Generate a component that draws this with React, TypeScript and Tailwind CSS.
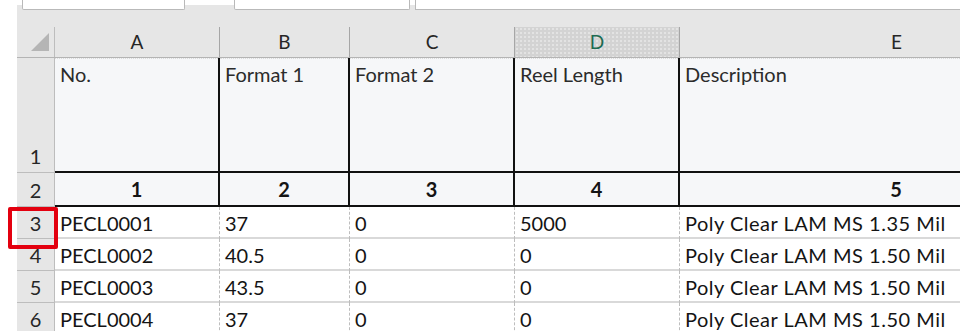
import React from "react";

type Col = { key: string; width: string; head: string; title: string; num: string };

const COLS: Col[] = [
  { key: "A", width: "w-[165px]", head: "A", title: "No.", num: "1" },
  { key: "B", width: "w-[130px]", head: "B", title: "Format 1", num: "2" },
  { key: "C", width: "w-[165px]", head: "C", title: "Format 2", num: "3" },
  { key: "D", width: "w-[165px]", head: "D", title: "Reel Length", num: "4" },
  { key: "E", width: "w-[434px]", head: "E", title: "Description", num: "5" },
];

const ROWS: { n: string; cells: string[] }[] = [
  { n: "3", cells: ["PECL0001", "37", "0", "5000", "Poly Clear LAM MS 1.35 Mil"] },
  { n: "4", cells: ["PECL0002", "40.5", "0", "0", "Poly Clear LAM MS 1.50 Mil"] },
  { n: "5", cells: ["PECL0003", "43.5", "0", "0", "Poly Clear LAM MS 1.50 Mil"] },
  { n: "6", cells: ["PECL0004", "37", "0", "0", "Poly Clear LAM MS 1.50 Mil"] },
];

function RowHead({ label, className = "" }: { label: string; className?: string }) {
  return (
    <div
      className={`w-[38px] shrink-0 flex justify-center bg-[#e6e6e6] border-r border-b border-[#bdbdbd] text-[#262626] ${className}`}
    >
      {label}
    </div>
  );
}

export default function App() {
  return (
    <div
      className="relative w-[960px] h-[331px] overflow-hidden bg-white text-[20px] text-[#141414]"
      style={{ fontFamily: "Lato, 'Noto Sans', sans-serif" }}
    >
      {/* formula bar remnants */}
      <div className="h-[27px] ml-[17px] flex items-start bg-[#e6e6e6] relative">
        <div className="absolute left-0 right-0 top-0 h-[5px] bg-white" />
        <div className="relative ml-[5px] w-[163px] h-[10px] bg-white border border-t-0 border-[#b9b9b9] rounded-b-[2px]" />
        <div className="relative ml-[49px] w-[176px] h-[10px] bg-white border border-t-0 border-[#b9b9b9] rounded-b-[2px]" />
        <div className="relative ml-[5px] flex-1 h-[10px] bg-white border border-t-0 border-r-0 border-[#b9b9b9]" />
      </div>

      <div className="ml-[17px] w-max">
        {/* column letters */}
        <div className="flex h-[31px] bg-[#e6e6e6] border-b border-[#b4b4b4] text-[19px]">
          <div className="w-[38px] shrink-0 flex items-end justify-end pr-[5px] pb-[6px] border-r border-[#bdbdbd]">
            <svg width="18" height="18" viewBox="0 0 18 18">
              <polygon points="18,0 18,18 0,18" fill="#b5b5b5" />
            </svg>
          </div>
          {COLS.map((c) =>
            c.key === "D" ? (
              <div
                key={c.key}
                className={`${c.width} shrink-0 flex items-center justify-center bg-[#d3d3d3] border-r border-[#a6a6a6] text-[#1e6b52]`}
                style={{
                  backgroundImage: "radial-gradient(#e3e3e3 0.8px, transparent 0.9px)",
                  backgroundSize: "4px 4px",
                }}
              >
                {c.head}
              </div>
            ) : (
              <div
                key={c.key}
                className={`${c.width} shrink-0 flex items-center justify-center border-r border-[#a6a6a6] text-[#262626]`}
              >
                {c.head}
              </div>
            ),
          )}
        </div>

        {/* row 1: titles */}
        <div className="flex h-[115px]">
          <RowHead label="1" className="items-end pb-[1px]" />
          {COLS.map((c) => (
            <div
              key={c.key}
              className={`${c.width} shrink-0 bg-[#f6f7f9] border-r-2 border-b-2 border-[#111] text-[#2b2b2b]`}
            >
              <div className="border-t border-dotted border-[#dcdcdc] pl-[5px]">{c.title}</div>
            </div>
          ))}
        </div>

        {/* row 2: numbers */}
        <div className="flex h-[34px]">
          <RowHead label="2" className="items-center" />
          {COLS.map((c) => (
            <div
              key={c.key}
              className={`${c.width} shrink-0 flex items-center justify-center bg-[#f6f7f9] border-r-2 border-b-2 border-[#111] font-bold`}
            >
              {c.num}
            </div>
          ))}
        </div>

        {/* data rows */}
        {ROWS.map((r) => (
          <div key={r.n} className="flex h-[32px]">
            <RowHead label={r.n} className="items-center" />
            {r.cells.map((v, i) => (
              <div
                key={i}
                className={`${COLS[i].width} shrink-0 flex items-center pl-[5px] border-r border-dashed border-[#bdbdbd] shadow-[inset_0_-2px_0_#d9d9d9]`}
              >
                {i === 4 ? <span className="tracking-[0.5px]">{v}</span> : v}
              </div>
            ))}
          </div>
        ))}
      </div>

      {/* selection highlight */}
      <div className="absolute left-[8px] top-[207px] w-[50px] h-[42px] border-[4px] border-[#e3000f] rounded-[2px]" />
    </div>
  );
}
